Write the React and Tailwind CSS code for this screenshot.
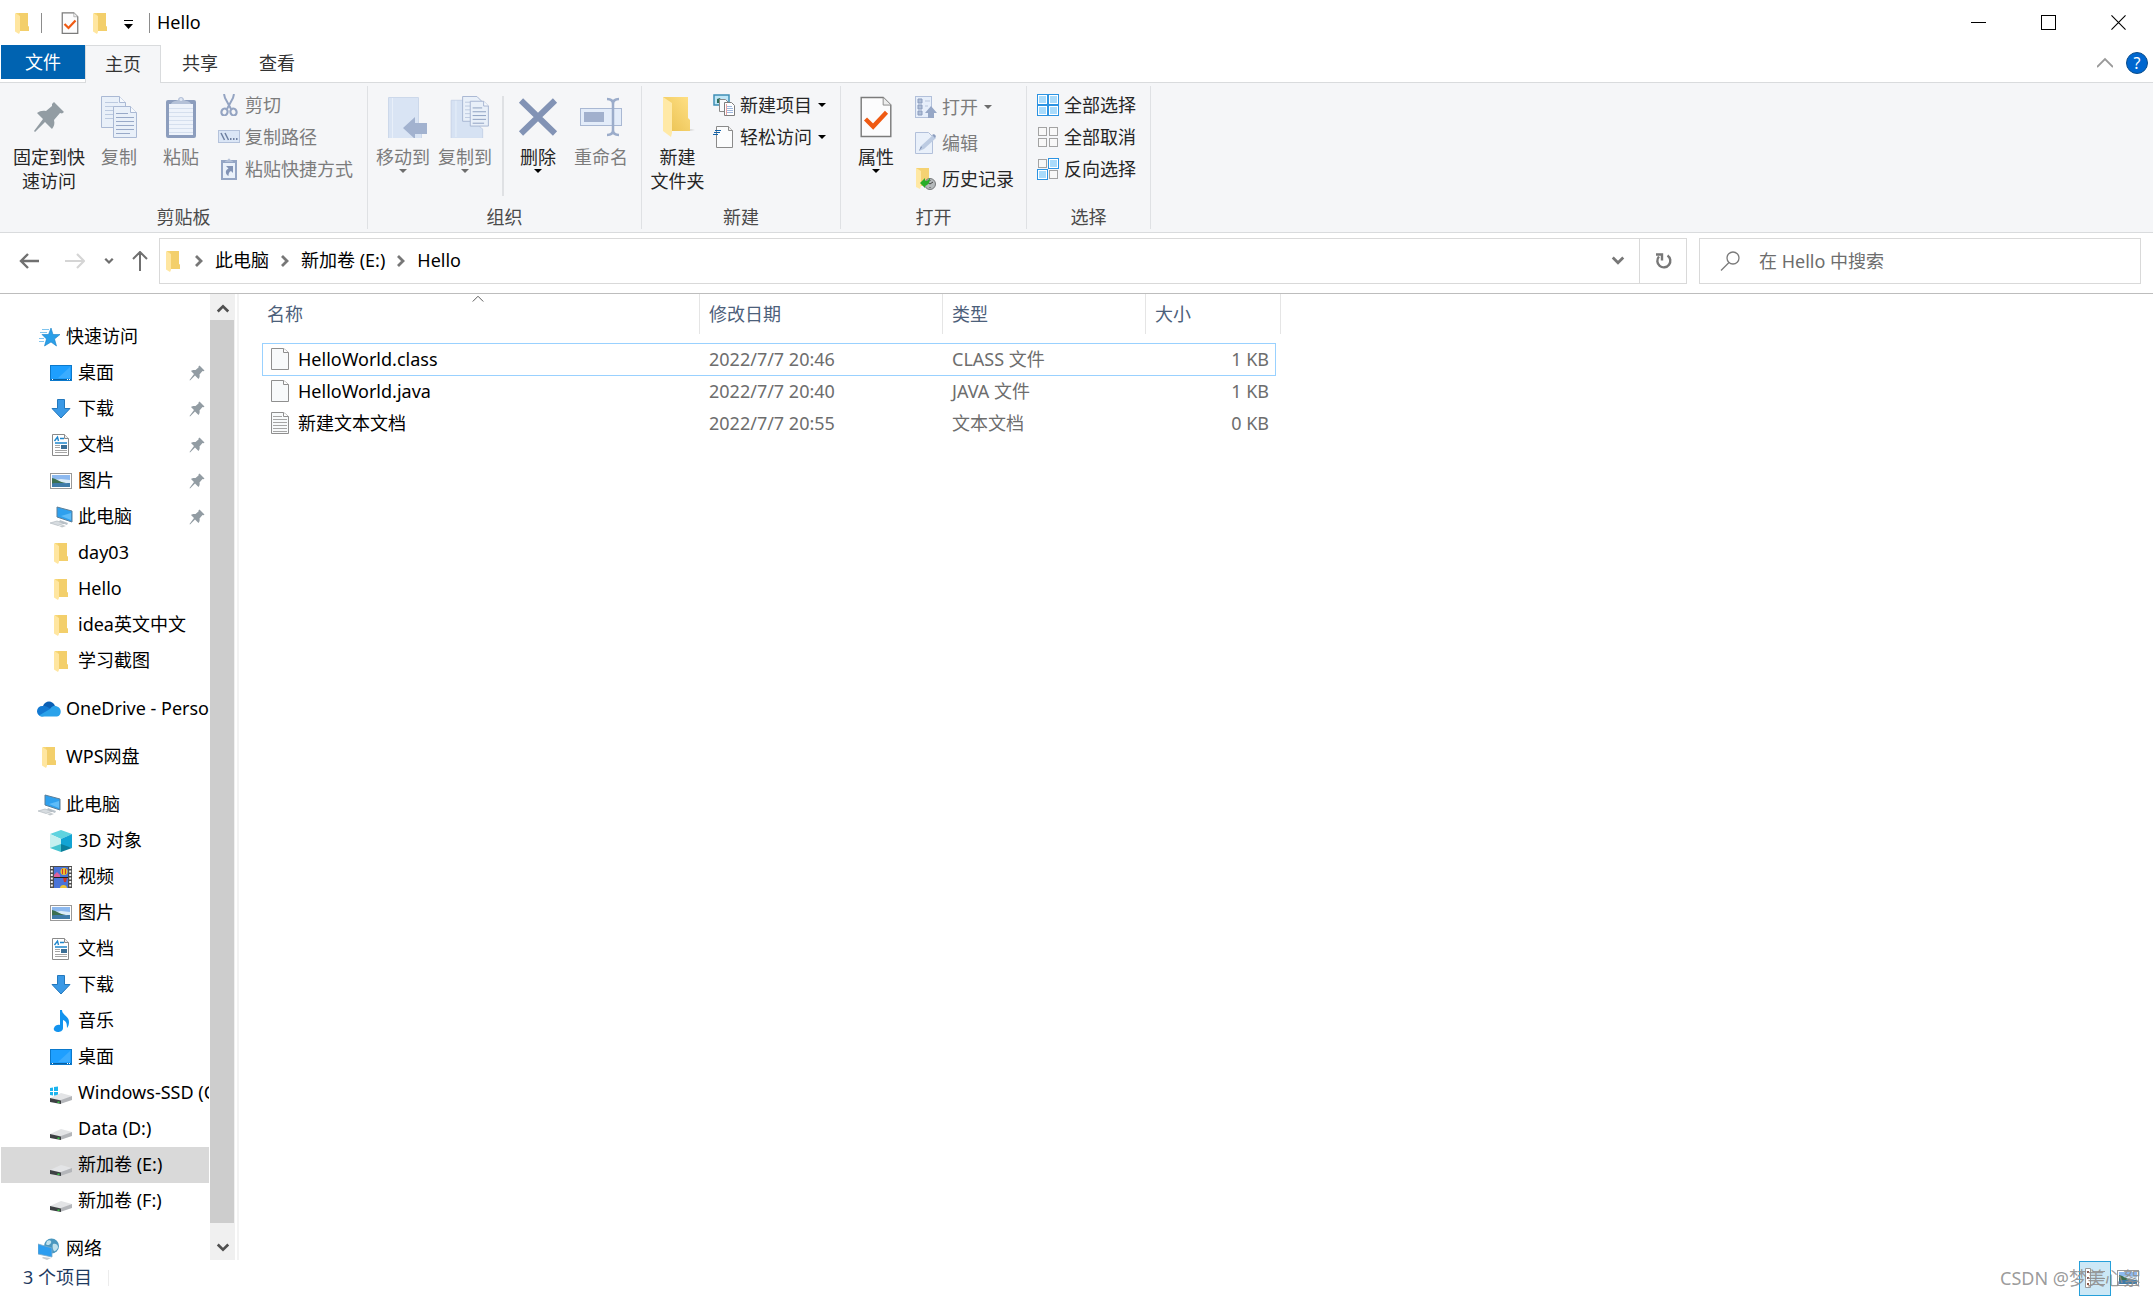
import { useState } from 'react';

const FolderIcon = ({ className = 'w-[22px] h-[22px]' }) => (
  <svg className={className} viewBox="0 0 22 22">
    <path d="M5 1h12v13l1 1v4H8z" fill="#f7d774" />
    <path d="M8 1h9v13l1 1v4H8z" fill="#f3cf6b" />
    <path d="M4 1l5 3v16l-1 2-4-2.500z" fill="#ffe6a0" />
  </svg>
);

const BigFolderIcon = () => (
  <svg className="w-[42px] h-[42px]" viewBox="0 0 42 42">
    <defs>
      <linearGradient id="folderBack" x1="0" y1="1" x2="1" y2="0">
        <stop offset="0" stopColor="#e9c04f" />
        <stop offset="1" stopColor="#ffe085" />
      </linearGradient>
    </defs>
    <path d="M34 33l4 1-5 1H16z" fill="#dcdcdc" />
    <path d="M6 1h25v21l2 2v11H12z" fill="url(#folderBack)" />
    <path d="M6 1l9 6v30l-1 4-8-6z" fill="#ffe9a6" />
  </svg>
);

const CheckDocIcon = ({ className, stroke = 3 }) => (
  <svg className={className} viewBox="0 0 34 44">
    <path d="M1.500 1.500h23l8 8v33h-31z" fill="#fcfcfd" stroke="#7b7b7b" strokeWidth={stroke / 2} />
    <path d="M24.500 1.500v8h8" fill="#ededed" stroke="#8a8a8a" />
    <path d="M6 24l8 8 14-15" fill="none" stroke="#ef5a13" strokeWidth="4.500" />
  </svg>
);

const PinIcon = ({ className, fill = '#929ca3' }) => (
  <svg className={className} viewBox="0 0 32 32">
    <path d="M21 1l10 10-2 1.500-2-.5-6 7c1 4 0 6-2 9l-7-7L2 31l-1-1 9-12-6-6c3-2 5-2.500 9-2l6-5V3z" fill={fill} />
  </svg>
);

const CopyIcon = ({ className = 'w-[42px] h-[42px]' }) => (
  <svg className={className} viewBox="0 0 42 42">
    <g fill="#e9f0f9" stroke="#aab9d4">
      <path d="M3.500.5h18l6 6v25h-24z" />
      <path d="M21.500.5v6h6" fill="#f6f9fd" />
      <path d="M7 6.500h13M7 10.500h17M7 14.500h17M7 18.500h17M7 22.500h17" stroke="#bccae0" />
      <path d="M15.500 10.500h17l6 6v25h-23z" />
      <path d="M32.500 10.500v6h6" fill="#f6f9fd" />
      <path d="M18 17.500h12M18 21.500h18M18 25.500h18M18 29.500h18M18 33.500h18M18 37.500h14" stroke="#98a9c8" />
    </g>
  </svg>
);

const PasteIcon = () => (
  <svg className="w-[42px] h-[42px]" viewBox="0 0 42 42">
    <rect x="6" y="4" width="30" height="38" rx="2" fill="#8c9dbd" />
    <path d="M9 8h24v31H9z" fill="#eef3fb" />
    <path d="M9 12.500h24M9 16.500h24M9 20.500h24M9 24.500h24M9 28.500h24M9 32.500h24M9 36.500h24" stroke="#d5dfee" />
    <path d="M11 8c1-3 5-3 7-4 0-4 6-4 6 0 2 1 6 1 7 4z" fill="#b4c1d8" />
    <circle cx="21" cy="3.500" r="1.500" fill="#dfe7f3" />
  </svg>
);

const ScissorsIcon = () => (
  <svg className="w-[22px] h-[22px]" viewBox="0 0 22 22" fill="none" stroke="#94a4c2">
    <path d="M6 0l1 4 6 11M16 0l-1 4-6 11" strokeWidth="2" />
    <ellipse cx="6.500" cy="18" rx="3" ry="3.500" strokeWidth="2.200" transform="rotate(20 6.500 18)" />
    <ellipse cx="15.500" cy="18" rx="3" ry="3.500" strokeWidth="2.200" transform="rotate(-20 15.500 18)" />
  </svg>
);

const PathIcon = () => (
  <svg className="w-[22px] h-[22px]" viewBox="0 0 22 22">
    <rect x=".5" y="4.500" width="21" height="12" fill="#dbe6f6" stroke="#b4c2db" />
    <path d="M3 7l3.500 7M7 7l3.500 7" stroke="#6f80a2" strokeWidth="1.500" />
    <path d="M12 12h1.500v2H12zM15 12h1.500v2H15zM18 12h1.500v2H18z" fill="#6f80a2" />
  </svg>
);

const PasteShortcutIcon = () => (
  <svg className="w-[22px] h-[22px]" viewBox="0 0 22 22">
    <rect x="3" y="2" width="16" height="20" fill="#94a5c4" />
    <path d="M5 5h12v15H5z" fill="#eaf1fa" />
    <path d="M7 4c0-2 3-1 4-4 1 3 4 2 4 4z" fill="#b1bed6" />
    <path d="M8 8h7v7l-2-2c-2 1-2.500 2.500-2.500 5C7 16 7 12 10.500 10.500z" fill="#8293b5" />
  </svg>
);

const MoveToIcon = () => (
  <svg className="w-[48px] h-[42px]" viewBox="-6 0 48 42">
    <path d="M3.500 1.500h30v34l3 2v5h-33z" fill="#d9e4f4" stroke="#ccd8ea" />
    <path d="M7.500 2v40" stroke="#e8eff9" />
    <path d="M18 32l12-11v6h12v11H30v5z" fill="#a2b2cf" />
  </svg>
);

const CopyToIcon = () => (
  <svg className="w-[50px] h-[42px]" viewBox="-9 0 50 44">
    <path d="M1.500 4.500h30v28l3 2v10h-33z" fill="#d6e2f3" stroke="#c5d2e7" />
    <path d="M6.500 5v38" stroke="#e8eff9" />
    <g fill="#e9f0f9" stroke="#a6b5d1">
      <path d="M13.500.5h15l5 5v21h-20z" />
      <path d="M16 6.500h10M16 10.500h14M16 14.500h14M16 18.500h14M16 22.500h14" stroke="#bccae0" />
      <path d="M21.500 5.500h14l5 5v21h-19z" />
      <path d="M35.500 5.500v5h5" fill="#f6f9fd" />
      <path d="M24 12.500h10M24 16.500h14M24 20.500h14M24 24.500h14M24 28.500h12" stroke="#8c9ec0" />
    </g>
  </svg>
);

const DeleteIcon = () => (
  <svg className="w-[42px] h-[42px]" viewBox="0 0 42 42">
    <path d="M4 4.500l34 33M38 4.500l-34 33" stroke="#8293b5" strokeWidth="6" />
  </svg>
);

const RenameIcon = () => (
  <svg className="w-[42px] h-[42px]" viewBox="0 0 42 42">
    <rect x=".5" y="12.500" width="41" height="17" fill="#e3ecf9" stroke="#a9b8d3" />
    <rect x="4" y="16" width="20" height="10" fill="#a1b0cd" />
    <path d="M27 3c4 0 6 2 6 5v26c0 3-2 5-6 5M39 3c-4 0-6 2-6 5v26c0 3 2 5 6 5" fill="none" stroke="#9bacca" strokeWidth="2.500" />
  </svg>
);

const NewItemIcon = () => (
  <svg className="w-[22px] h-[22px]" viewBox="0 0 22 22">
    <rect x="1" y="1" width="15" height="10" fill="#bfe6f7" stroke="#3f8fb5" strokeWidth="1.500" />
    <path d="M4 9V5l3-1 2 5z" fill="#2c6e5a" />
    <path d="M6.500 5.500h6l3 3v9h-9z" fill="#f9fbfd" stroke="#8a8a8a" />
    <path d="M11.500 8.500h7l3 3v10h-10z" fill="#fff" stroke="#7d7d7d" />
    <path d="M14 12.500h5M14 14.500h6M14 16.500h6M14 18.500h6" stroke="#9fb7dd" />
    <path d="M13.500 10v11" stroke="#e9a2a2" />
  </svg>
);

const EasyAccessIcon = () => (
  <svg className="w-[22px] h-[22px]" viewBox="0 0 22 22">
    <path d="M3.500.5h12l4 4v17h-16z" fill="#fbfcfd" stroke="#8a8a8a" />
    <path d="M15.500.5v4h4" fill="#eee" stroke="#8a8a8a" />
    <path d="M2 4.500h6M1 6.500h6M0 8.500h5" stroke="#1262a8" strokeWidth="1.200" />
  </svg>
);

const OpenIcon = () => (
  <svg className="w-[22px] h-[22px]" viewBox="0 0 22 22">
    <rect x=".5" y=".5" width="16" height="21" fill="#e6eefa" stroke="#b2c0da" />
    <path d="M3 3h4v4H3zM3 9h4v4H3zM3 15h4v4H3z" fill="#aebdd6" stroke="#8b9cbd" />
    <path d="M10 5h5M10 10h3" stroke="#b9c6dd" />
    <path d="M16 10l6 7h-3v5h-6v-5h-3z" fill="#96a7c6" />
  </svg>
);

const EditIcon = () => (
  <svg className="w-[22px] h-[22px]" viewBox="0 0 22 22">
    <path d="M.5.5h13l4 4v17H.5z" fill="#e9f0fa" stroke="#b2c0da" />
    <path d="M4 19l2-5L18 3l3 3L9 17z" fill="#bccbe2" />
    <path d="M17 3l2-1 2 2-1 2z" fill="#8c9dbe" />
    <path d="M4 19l2-5 1 1.500z" fill="#8293b5" />
  </svg>
);

const HistoryIcon = () => (
  <svg className="w-[22px] h-[22px]" viewBox="0 0 22 22">
    <path d="M1 0h13v18H5z" fill="#f5d272" />
    <path d="M1 0l5 3v15l-1 3-4-2z" fill="#ffe8a3" />
    <circle cx="15" cy="16" r="5.500" fill="#b5b9bb" stroke="#77797b" />
    <path d="M12 14l3 2 3-2M15 12v1M15 19v1" stroke="#444" fill="none" />
    <path d="M5 15l5-5v3c3 0 4-2 5-3 0 5-2 7-5 8v2z" fill="#28ad28" />
  </svg>
);

const SELECT_CELLS = [[0, 0], [11, 0], [0, 11], [11, 11]];
const SelectIcon = ({ on }) => (
  <svg className="w-[22px] h-[22px]" viewBox="0 0 22 22">
    {SELECT_CELLS.map(([x, y], i) =>
      on[i] ? (
        <g key={i}>
          <rect x={x + 0.5} y={y + 0.5} width="10" height="10" fill="#fff" stroke="#2b93e2" />
          <rect x={x + 2} y={y + 2} width="7" height="7" fill="#a9dbfb" />
        </g>
      ) : (
        <rect key={i} x={x + 1.5} y={y + 1.5} width="8" height="8" fill="#f8f8f8" stroke="#a3a3a3" />
      )
    )}
  </svg>
);

const StarIcon = () => (
  <svg className="w-[22px] h-[22px]" viewBox="0 0 22 22">
    <path d="M13 2l2 6.500h7l-5.500 4.500L18.500 20 13 16l-6.500 4L8.500 13 4 8.500h6.500z" fill="#2a9fe8" stroke="#1680c8" strokeWidth=".6" />
    <path d="M4 3.500h7M2 6.500h7M1 12.500h5M1 15.500h5" stroke="#7fc4ee" />
  </svg>
);

const DesktopIcon = () => (
  <svg className="w-[22px] h-[22px]" viewBox="0 0 22 22">
    <rect x=".5" y="3.500" width="21" height="15" fill="#1e9fff" stroke="#0b79cc" />
    <path d="M8 16L20 5v11z" fill="#3bacff" />
    <path d="M1 17.500h20" stroke="#0a5f9f" />
    <path d="M2 17.500h1M17 17.500h1M19 17.500h1" stroke="#fff" />
  </svg>
);

const DownloadIcon = () => (
  <svg className="w-[22px] h-[22px]" viewBox="0 0 22 22">
    <path d="M7.500 1.500h7v9h5.500l-9 9.500-9-9.500h5.500z" fill="#3a99e6" stroke="#2378bd" />
  </svg>
);

const DocsIcon = () => (
  <svg className="w-[22px] h-[22px]" viewBox="0 0 22 22">
    <path d="M2.500.5h12l4 4v17h-16z" fill="#fff" stroke="#8a8a8a" />
    <path d="M14.500.5v4h4" fill="#eee" stroke="#8a8a8a" />
    <path d="M4.500 7l3-4 1 4M10 4.500h4M5 9h12" fill="none" stroke="#1f86cc" strokeWidth="1.400" />
    <path d="M5 11.500h5M5 13.500h5M5 16.500h12M5 18.500h12" stroke="#a5a5a5" />
    <rect x="11" y="11" width="6" height="4" fill="#3c6f96" />
  </svg>
);

const PictureIcon = () => (
  <svg className="w-[22px] h-[22px]" viewBox="0 0 22 22">
    <rect x=".5" y="3.500" width="21" height="15" fill="#fff" stroke="#999" />
    <path d="M2 5h18v12H2z" fill="#8db9ef" />
    <path d="M2 9c3 0 6 1 9 0 3 0 6 1 9 1v3H2z" fill="#dcecf8" />
    <path d="M2 8c5 1 7 4 14 5L2 14z" fill="#3b6f50" />
    <path d="M2 13.500c7-1 12 0 18-.5v4H2z" fill="#3f7ba8" />
  </svg>
);

const ComputerIcon = () => (
  <svg className="w-[24px] h-[22px]" viewBox="0 0 24 22">
    <path d="M8 1l15 4v11L8 11z" fill="#2ea0ee" stroke="#5d7f98" />
    <path d="M12 10l10-3v7z" fill="#5fbcf8" />
    <path d="M11 14l8 3-1 2-8-3z" fill="#b9c2c9" />
    <path d="M1 17l7-2 7 2.500-6 2z" fill="#d7dce0" stroke="#aab2b8" strokeWidth=".6" />
    <path d="M10 20l4-1 3 1-4 1.500z" fill="#c2c8cc" />
  </svg>
);

const OneDriveIcon = () => (
  <svg className="w-[24px] h-[16px]" viewBox="0 0 24 16">
    <path d="M6 5C8-1 16-1 18 5l-5 4z" fill="#0a5fb4" />
    <path d="M5 15.500A5 5 0 0 1 5.500 5c3-.5 5 .5 8 3l-6 7z" fill="#1279d2" />
    <path d="M13 8c2-3 5-4 7-2.500 5 1.500 5 9 0 10H5c-1 0-2-.5-3-1z" fill="#2aa2ea" />
  </svg>
);

const CubeIcon = () => (
  <svg className="w-[22px] h-[22px]" viewBox="0 0 22 22">
    <path d="M0 4l11-4 11 4-11 5z" fill="#5fd3df" />
    <path d="M0 4l11 5v8L0 18z" fill="#c5f0f0" />
    <path d="M22 4L11 9v7l11 2z" fill="#12a4d3" />
    <path d="M0 18l11-4v8z" fill="#46c4d0" />
    <path d="M22 18l-11-4v8z" fill="#0a7f9c" />
  </svg>
);

const VideoIcon = () => (
  <svg className="w-[22px] h-[22px]" viewBox="0 0 22 22">
    <path d="M0 0h22v22H0z" fill="#4c4c4c" />
    <path d="M4 1h14v10H4zM4 12h14v10H4z" fill="#4a74d8" />
    <path d="M1.800 1v21M20.200 1v21" stroke="#f4f4f4" strokeWidth="2" strokeDasharray="2 1.500" />
    <circle cx="14" cy="5.500" r="3.500" fill="#e9c22d" />
    <path d="M12.500 3v5M15.500 3v5" stroke="#d8362a" />
    <path d="M4 9l3-3 3 3v2H4z" fill="#e0609b" />
    <path d="M13 12h4l-1 4h-2z" fill="#c9372a" />
    <path d="M10 22c0-4 7-4 7 0z" fill="#eec437" />
    <path d="M4 11.500h14" stroke="#222" />
  </svg>
);

const MusicIcon = () => (
  <svg className="w-[22px] h-[22px]" viewBox="0 0 22 22">
    <path d="M10 0h2c0 5 7 6 7 12 0 3-1 5-2 6 0-5-1-7-4-8v8c0 3-3 4-5 4-3 0-5-2-4-4 1-3 4-3.500 6-3z" fill="#1293ee" />
  </svg>
);

const DriveIcon = ({ windows }) => (
  <svg className="w-[22px] h-[22px]" viewBox="0 -4 22 22">
    {windows && <path d="M0 2l3-.5V5H0zM4 1l4-.5V5H4zM0 6h3v3.500L0 9zM4 6h4v4l-4-.5z" fill="#1cb4ee" />}
    <path d="M0 12l11-5 11 3-11 5z" fill="#e3e4e6" />
    <path d="M11 14l11-4v4l-12 4z" fill="#b4b6ba" />
    <path d="M0 12l11 2.500V18L0 16z" fill="#3d4043" />
    <path d="M7.500 15.500h2v1.500h-2z" fill="#37c844" />
  </svg>
);

const NetworkIcon = () => (
  <svg className="w-[22px] h-[22px]" viewBox="0 0 22 22">
    <circle cx="13.500" cy="8" r="7.500" fill="#4a97bf" />
    <path d="M9 3c3-2 5 0 4 2s-4 3-5 1zM15 6c3-1 5 1 5 3s-3 5-4 4-2-5-1-7z" fill="#bfe0ec" />
    <path d="M0 6l14 4v9L0 16z" fill="#2c9df0" stroke="#7ba9c8" strokeWidth=".8" />
    <path d="M5 19l8 1-4 2-5-2z" fill="#c6cbcf" />
  </svg>
);

const FileIcon = ({ lines }) => (
  <svg className="w-[18px] h-[22px]" viewBox="0 0 18 22">
    <path d="M.5.5h12l5 4v17H.5z" fill="#f8fafb" stroke="#8f8f8f" />
    <path d="M12.500.5v4h5" fill="#fff" stroke="#8f8f8f" />
    {lines && <path d="M2 4.500h9M2 7.500h14M2 10.500h14M2 13.500h14M2 16.500h14M2 19.500h14" stroke="#a5a5a5" />}
  </svg>
);

const Chevron = ({ d, className, width = 2.5, stroke = '#6e6e6e' }) => (
  <svg className={className} viewBox="0 0 16 16" fill="none" stroke={stroke} strokeWidth={width}>
    <path d={d} />
  </svg>
);

const Caret = ({ muted }) => (
  <svg className="w-[8px] h-[4px] shrink-0" viewBox="0 0 8 4">
    <path d="M0 0h8L4 4z" fill={muted ? '#6d6d6d' : '#000'} />
  </svg>
);

// ---- ribbon ----

const BigButton = ({ icon, lines, muted, caret, className }) => (
  <button className={`flex flex-col items-center ${className} ${muted ? 'text-[#7c7c7c]' : 'text-[#262626]'}`}>
    {icon}
    <span className="mt-[7px] block leading-6">
      {lines.map((line) => (
        <span key={line} className="block">{line}</span>
      ))}
    </span>
    {caret && <Caret muted={muted} />}
  </button>
);

const SmallButton = ({ icon, label, muted, caret }) => (
  <button className={`flex h-8 items-center ${muted ? 'text-[#7c7c7c]' : 'text-[#262626]'}`}>
    {icon}
    <span className="ml-[5px]">{label}</span>
    {caret && <span className="ml-1.5"><Caret muted={muted} /></span>}
  </button>
);

const RibbonGroup = ({ title, children, className }) => (
  <section className="flex flex-col justify-between border-r border-[#dfe1e4]">
    <div className={`flex items-start pt-2.5 ${className}`}>{children}</div>
    <h2 className="text-center leading-6 text-[#4a4a4a]">{title}</h2>
  </section>
);

const Ribbon = () => (
  <div className="flex h-[151px] shrink-0 border-y border-[#d9dbdd] bg-[#f5f6f8] py-[3px]">
    <RibbonGroup title="剪贴板" className="pl-[7px] pr-3.5">
      <BigButton
        icon={<span className="flex h-[42px] items-center"><PinIcon className="w-[32px] h-[32px]" /></span>}
        lines={['固定到快', '速访问']}
        className="w-[84px]"
      />
      <BigButton icon={<CopyIcon />} lines={['复制']} muted className="w-[56px]" />
      <BigButton icon={<PasteIcon />} lines={['粘贴']} muted className="w-[68px]" />
      <div className="-mt-[7px] ml-[3px]">
        <SmallButton icon={<ScissorsIcon />} label="剪切" muted />
        <SmallButton icon={<PathIcon />} label="复制路径" muted />
        <SmallButton icon={<PasteShortcutIcon />} label="粘贴快捷方式" muted />
      </div>
    </RibbonGroup>
    <RibbonGroup title="组织" className="pl-1 pr-[5px]">
      <BigButton icon={<MoveToIcon />} lines={['移动到']} muted caret className="w-[62px]" />
      <BigButton icon={<CopyToIcon />} lines={['复制到']} muted caret className="w-[62px]" />
      <div className="mx-1.5 h-[100px] w-0.5 bg-[#dfe1e4]" />
      <BigButton icon={<DeleteIcon />} lines={['删除']} caret className="w-[56px]" />
      <BigButton icon={<RenameIcon />} lines={['重命名']} muted className="w-[70px]" />
    </RibbonGroup>
    <RibbonGroup title="新建" className="pr-3.5">
      <BigButton icon={<BigFolderIcon />} lines={['新建', '文件夹']} className="w-[71px]" />
      <div className="-mt-[7px]">
        <SmallButton icon={<NewItemIcon />} label="新建项目" caret />
        <SmallButton icon={<EasyAccessIcon />} label="轻松访问" caret />
      </div>
    </RibbonGroup>
    <RibbonGroup title="打开" className="pr-3">
      <BigButton icon={<CheckDocIcon className="h-[42px] w-[34px]" />} lines={['属性']} caret className="w-[70px]" />
      <div className="-mt-[5px] ml-1 flex flex-col gap-1">
        <SmallButton icon={<OpenIcon />} label="打开" muted caret />
        <SmallButton icon={<EditIcon />} label="编辑" muted />
        <SmallButton icon={<HistoryIcon />} label="历史记录" />
      </div>
    </RibbonGroup>
    <RibbonGroup title="选择" className="pl-2.5 pr-3.5">
      <div className="-mt-[7px]">
        <SmallButton icon={<SelectIcon on={[1, 1, 1, 1]} />} label="全部选择" />
        <SmallButton icon={<SelectIcon on={[0, 0, 0, 0]} />} label="全部取消" />
        <SmallButton icon={<SelectIcon on={[0, 1, 1, 0]} />} label="反向选择" />
      </div>
    </RibbonGroup>
  </div>
);

// ---- navigation tree ----

const TREE = [
  {
    label: '快速访问',
    icon: <StarIcon />,
    children: [
      { label: '桌面', icon: <DesktopIcon />, pinned: true },
      { label: '下载', icon: <DownloadIcon />, pinned: true },
      { label: '文档', icon: <DocsIcon />, pinned: true },
      { label: '图片', icon: <PictureIcon />, pinned: true },
      { label: '此电脑', icon: <ComputerIcon />, pinned: true },
      { label: 'day03', icon: <FolderIcon /> },
      { label: 'Hello', icon: <FolderIcon /> },
      { label: 'idea英文中文', icon: <FolderIcon /> },
      { label: '学习截图', icon: <FolderIcon /> },
    ],
  },
  { label: 'OneDrive - Personal', icon: <OneDriveIcon /> },
  { label: 'WPS网盘', icon: <FolderIcon /> },
  {
    label: '此电脑',
    icon: <ComputerIcon />,
    children: [
      { label: '3D 对象', icon: <CubeIcon /> },
      { label: '视频', icon: <VideoIcon /> },
      { label: '图片', icon: <PictureIcon /> },
      { label: '文档', icon: <DocsIcon /> },
      { label: '下载', icon: <DownloadIcon /> },
      { label: '音乐', icon: <MusicIcon /> },
      { label: '桌面', icon: <DesktopIcon /> },
      { label: 'Windows-SSD (C:)', icon: <DriveIcon windows /> },
      { label: 'Data (D:)', icon: <DriveIcon /> },
      { label: '新加卷 (E:)', icon: <DriveIcon /> },
      { label: '新加卷 (F:)', icon: <DriveIcon /> },
    ],
  },
  { label: '网络', icon: <NetworkIcon /> },
];

const TreeItem = ({ item, nested, selected, onSelect }) => (
  <button
    onClick={() => onSelect(item.label)}
    className={`flex h-9 w-full items-center overflow-hidden whitespace-nowrap text-left ${nested ? 'pl-[48px]' : 'pl-[36px]'} ${
      selected ? 'bg-[#d9d9d9]' : 'hover:bg-[#e5f3ff]'
    }`}
  >
    <span className="flex w-6 shrink-0 justify-center">{item.icon}</span>
    <span className="ml-[5px] flex-1 pb-0.5">{item.label}</span>
    {item.pinned && <PinIcon className="mr-1 h-4 w-4" />}
  </button>
);

const Sidebar = () => {
  const [selected, setSelected] = useState('新加卷 (E:)');

  return (
    <aside className="flex w-[239px] shrink-0 border-r-2 border-[#f3f3f3]">
      <nav className="flex w-[209px] flex-col gap-3 overflow-hidden pl-px pt-[25px]">
        {TREE.map((root) => (
          <div key={root.label} className="shrink-0">
            <TreeItem item={root} onSelect={setSelected} />
            {root.children?.map((item) => (
              <TreeItem key={item.label} item={item} nested selected={item.label === selected} onSelect={setSelected} />
            ))}
          </div>
        ))}
      </nav>
      <div className="ml-px flex w-[25px] flex-col bg-[#f0f0f0]">
        <button className="flex h-[26px] items-center justify-center pt-0.5" aria-label="向上滚动">
          <Chevron d="M2 12l6-6 6 6" className="h-3.5 w-3.5" width={3} stroke="#505050" />
        </button>
        <div className="mr-px flex-1 bg-[#cdcdcd]" />
        <button className="flex h-[37px] items-center justify-center pt-3" aria-label="向下滚动">
          <Chevron d="M2 4l6 6 6-6" className="h-3.5 w-3.5" width={3} stroke="#505050" />
        </button>
      </div>
    </aside>
  );
};

// ---- file list ----

const FILES = [
  { name: 'HelloWorld.class', date: '2022/7/7 20:46', type: 'CLASS 文件', size: '1 KB' },
  { name: 'HelloWorld.java', date: '2022/7/7 20:40', type: 'JAVA 文件', size: '1 KB' },
  { name: '新建文本文档', date: '2022/7/7 20:55', type: '文本文档', size: '0 KB', text: true },
];

const FileList = () => (
  <main className="flex-1 pl-[23px]">
    <table className="w-[1019px] table-fixed border-separate border-spacing-0 text-left">
      <colgroup>
        <col className="w-[438px]" />
        <col className="w-[243px]" />
        <col className="w-[203px]" />
        <col />
      </colgroup>
      <thead className="text-[#4c607a]">
        <tr className="h-10">
          <th className="relative border-r border-[#e5e5e5] pl-[5px] font-normal">
            名称
            <Chevron d="M1 10l7-7 7 7" className="absolute left-[210px] top-0 h-3 w-3" width={1.3} stroke="#555" />
          </th>
          <th className="border-r border-[#e5e5e5] pl-[9px] font-normal">修改日期</th>
          <th className="border-r border-[#e5e5e5] pl-[9px] font-normal">类型</th>
          <th className="border-r border-[#e5e5e5] pl-[9px] font-normal">大小</th>
        </tr>
      </thead>
    </table>
    <table className="mt-[9px] w-[1014px] table-fixed border-separate border-spacing-0 text-left text-[#6d6d6d]">
      <colgroup>
        <col className="w-[438px]" />
        <col className="w-[243px]" />
        <col className="w-[203px]" />
        <col />
      </colgroup>
      <tbody>
        {FILES.map((file, i) => {
          const edge = i === 0 ? 'border-y border-[#99d1ff]' : '';
          return (
            <tr key={file.name} className={i === 0 ? 'h-[33px]' : 'h-8'}>
              <td className={`${edge} ${i === 0 ? 'border-l' : 'pl-px'} pb-0.5 text-black`}>
                <span className="flex items-center gap-[9px] pl-2">
                  <FileIcon lines={file.text} />
                  {file.name}
                </span>
              </td>
              <td className={`${edge} pb-0.5 pl-[9px]`}>{file.date}</td>
              <td className={`${edge} pb-0.5 pl-[9px]`}>{file.type}</td>
              <td className={`${edge} ${i === 0 ? 'border-r pr-1.5' : 'pr-[7px]'} pb-0.5 text-right`}>{file.size}</td>
            </tr>
          );
        })}
      </tbody>
    </table>
  </main>
);

// ---- window chrome ----

const TitleBar = () => (
  <header className="flex h-[45px] shrink-0 items-center pl-[11px]">
    <FolderIcon />
    <span className="ml-2 h-5 w-px bg-[#8c8c8c]" />
    <CheckDocIcon className="ml-[19px] h-[22px] w-[18px]" stroke={5} />
    <span className="ml-2.5"><FolderIcon /></span>
    <button className="ml-[13px] mt-1" aria-label="自定义快速访问工具栏">
      <svg className="h-[9px] w-[9px]" viewBox="0 0 9 9">
        <path d="M0 0h9v1H0zM0 4h9L4.500 9z" />
      </svg>
    </button>
    <span className="ml-4 h-5 w-px bg-[#8c8c8c]" />
    <h1 className="ml-[7px] flex-1 pb-0.5">Hello</h1>
    <button className="flex h-full w-[70px] items-center justify-center" aria-label="最小化">
      <span className="h-px w-[15px] bg-black" />
    </button>
    <button className="flex h-full w-[70px] items-center justify-center" aria-label="最大化">
      <span className="h-[15px] w-[15px] border border-black" />
    </button>
    <button className="flex h-full w-[70px] items-center justify-center" aria-label="关闭">
      <Chevron d="M0.500 0.500l15 15M15.500 0.500l-15 15" className="h-[15px] w-[15px]" width={1.2} stroke="#000" />
    </button>
  </header>
);

const TabBar = () => (
  <div className="flex h-[37px] shrink-0 items-start pl-px text-[#333]">
    <button className="h-[34px] w-[84px] bg-[#0063b1] text-white">文件</button>
    <button className="relative h-[38px] w-[76px] border border-b-0 border-[#d9dbdd] bg-[#f5f6f8] pb-0.5">主页</button>
    <button className="h-[37px] w-[78px] pb-0.5">共享</button>
    <button className="h-[37px] w-[76px] pb-0.5">查看</button>
    <div className="ml-auto flex h-[36px] items-center gap-[13px] pr-[5px]">
      <button aria-label="最小化功能区">
        <Chevron d="M0 12l8-8 8 8" className="block h-4 w-4" width={1.8} stroke="#999" />
      </button>
      <button className="h-[22px] w-[22px] rounded-full border border-[#0a4d8c] bg-[#0067cf] text-base leading-5 text-white">?</button>
    </div>
  </div>
);

const Crumb = ({ children }) => (
  <>
    <Chevron d="M5 3l5 5-5 5" className="h-4 w-4" width={2.8} stroke="#777" />
    <a href="#" className="mx-2 pb-0.5">{children}</a>
  </>
);

const AddressBar = () => (
  <div className="flex h-[61px] shrink-0 items-center border-b border-[#bdbdbd] pr-3 pb-1 pl-[19px]">
    <button aria-label="后退">
      <svg className="h-5 w-5" viewBox="0 0 20 20" fill="none" stroke="#707070" strokeWidth="2.400">
        <path d="M2 10h18M9 3l-7 7 7 7" />
      </svg>
    </button>
    <button className="ml-[26px]" aria-label="前进">
      <svg className="h-5 w-5" viewBox="0 0 20 20" fill="none" stroke="#d5d5d5" strokeWidth="2.200">
        <path d="M0 10h19M12 3l7 7-7 7" />
      </svg>
    </button>
    <button className="ml-[18px]" aria-label="最近浏览的位置">
      <Chevron d="M3 5l5 5 5-5" className="block h-3 w-3" width={3} />
    </button>
    <button className="ml-[15px]" aria-label="上移">
      <svg className="h-5 w-5" viewBox="0 0 20 20" fill="none" stroke="#707070" strokeWidth="2">
        <path d="M10 1v19M3 8l7-7 7 7" />
      </svg>
    </button>
    <div className="ml-[9px] flex h-[46px] flex-1 items-center border border-[#d9d9d9] pl-0.5">
      <FolderIcon />
      <nav className="ml-[7px] flex flex-1 items-center">
        <Crumb>此电脑</Crumb>
        <Crumb>新加卷 (E:)</Crumb>
        <Crumb>Hello</Crumb>
      </nav>
      <button className="px-3.5" aria-label="上一个位置">
        <Chevron d="M2 4l6 6 6-6" className="block h-3.5 w-3.5" width={3.2} stroke="#777" />
      </button>
      <button className="flex h-full w-[47px] items-center justify-center border-l border-[#d9d9d9]" aria-label="刷新">
        <svg className="h-[17px] w-[17px]" viewBox="0 0 17 17" fill="none" stroke="#777" strokeWidth="2.400">
          <path d="M12.500 2.500A6.500 6.500 0 1 1 4 3.500" />
          <path d="M1 1.500h6v6" />
        </svg>
      </button>
    </div>
    <label className="ml-3 flex h-[46px] w-[442px] items-center border border-[#d9d9d9] pl-5">
      <svg className="h-5 w-5" viewBox="0 0 20 20" fill="none" stroke="#7a7a7a" strokeWidth="1.300">
        <circle cx="13" cy="7" r="6" />
        <path d="M9 11.500L1 19.500" />
      </svg>
      <input
        type="text"
        aria-label="搜索"
        placeholder="在 Hello 中搜索"
        className="ml-[19px] flex-1 outline-none placeholder:text-[#6d6d6d]"
      />
    </label>
  </div>
);

const StatusBar = () => (
  <footer className="flex h-9 shrink-0 items-center text-[#1e3a5f]">
    <span className="ml-[23px] pb-0.5">3 个项目</span>
    <span className="ml-4 h-4 w-px bg-[#ececec]" />
    <div className="relative ml-auto flex items-center pr-3.5">
      <button className="flex h-[35px] w-8 items-center justify-center border border-[#26a0da] bg-[#cce8f6]" aria-label="详细信息">
        <svg className="h-5 w-5" viewBox="0 0 20 20">
          <path d="M.5.5h5v19h-5z" fill="#fff" stroke="#999" />
          <path d="M2 3h2v2H2zM2 9h2v2H2zM2 15h2v2H2z" fill="#8c5a4a" />
          <path d="M8 3.500h12M8 10.500h12M8 16.500h12" stroke="#9a9a9a" />
        </svg>
      </button>
      <button className="ml-1.5" aria-label="大图标"><PictureIcon /></button>
      <span className="pointer-events-none absolute right-3 whitespace-nowrap text-[#8f8f8f]/90">CSDN @梦美心絮</span>
    </div>
  </footer>
);

export default function App() {
  return (
    <div className="flex h-screen flex-col bg-white font-['Noto_Sans','Noto_Sans_CJK_SC',sans-serif] text-[18px] leading-6 text-black">
      <TitleBar />
      <TabBar />
      <Ribbon />
      <AddressBar />
      <div className="flex min-h-0 flex-1">
        <Sidebar />
        <FileList />
      </div>
      <StatusBar />
    </div>
  );
}
